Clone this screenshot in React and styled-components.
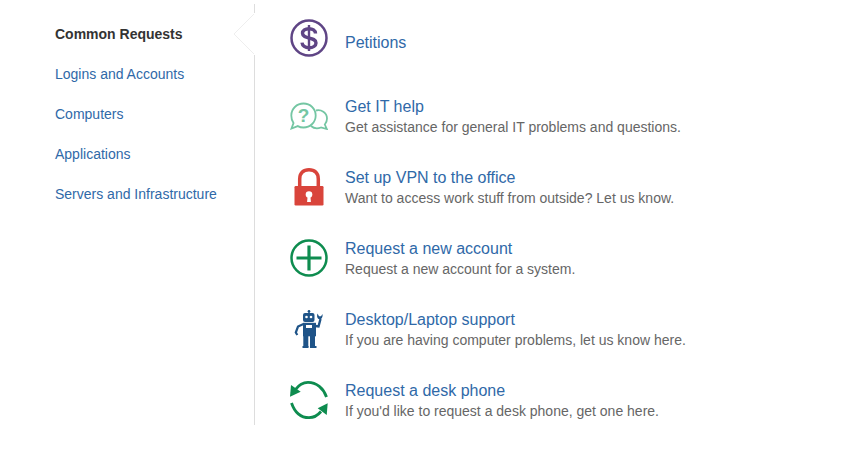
import React from "react";
import styled, { createGlobalStyle } from "styled-components";

const Global = createGlobalStyle`
  html, body { margin: 0; padding: 0; background: #fff; }
  body { font-family: "Liberation Sans", Arial, sans-serif; }
`;

const Page = styled.div`
  display: flex;
  width: 861px;
  height: 450px;
  padding-top: 4px;
  box-sizing: border-box;
  align-items: flex-start;
`;

const Sidebar = styled.nav`
  position: relative;
  width: 255px;
  height: 421px;
  box-sizing: border-box;
  border-right: 1px solid #dddddd;
  padding: 10px 0 0 55px;
  display: flex;
  flex-direction: column;
`;

const NavItem = styled.a`
  display: block;
  height: 40px;
  line-height: 40px;
  font-size: 14px;
  color: ${(p) => (p.$active ? "#333333" : "#2f69a8")};
  font-weight: ${(p) => (p.$active ? 700 : 400)};
  white-space: nowrap;
`;

const Notch = styled.svg`
  position: absolute;
  right: -1px;
  top: 9px;
  width: 22px;
  height: 42px;
`;

const Main = styled.main`
  padding: 14px 0 0 35px;
  display: flex;
  flex-direction: column;
`;

const Row = styled.div`
  display: flex;
  align-items: center;
  height: ${(p) => p.$h || 71}px;
`;

const IconBox = styled.div`
  width: 38px;
  height: 40px;
  margin-right: 17px;
  margin-bottom: ${(p) => p.$raise || 2}px;
  display: flex;
  align-items: center;
  justify-content: center;
  flex: none;
`;

const Title = styled.div`
  font-size: 16px;
  line-height: 21px;
  color: #2f69a8;
`;

const Desc = styled.div`
  font-size: 14px;
  line-height: 20px;
  color: #666666;
`;

const Dollar = () => (
  <svg width="38" height="38" viewBox="0 0 38 38">
    <circle cx="19" cy="19" r="17.500" fill="none" stroke="#5f4585" strokeWidth="2.500" />
    <path d="M25.500 14.500c0-3-3-4.800-6.500-4.800-3.800 0-6.500 1.800-6.500 4.600 0 6.300 13.500 3.200 13.500 9.600 0 3-3 4.800-7 4.800-3.700 0-6.700-1.800-7-5" fill="none" stroke="#5f4585" strokeWidth="3.400" />
    <path d="M17.800 6h2.400v26h-2.400z" fill="#5f4585" />
  </svg>
);

const Chat = () => (
  <svg width="38" height="28" viewBox="0 0 38 28">
    <path d="M26 8.500c5-1.200 11 2 11 8 0 2.500-.8 4.500-2.200 6l2 4.500-5.800-1.500c-3.500 1.300-7.500.7-10-1.500" fill="none" stroke="#74c6a3" strokeWidth="1.800" />
    <path d="M13.500 1.500c6.800 0 12.200 5.300 12.200 12s-5.400 12-12.200 12c-2.200 0-4-.5-5.700-1.400L1.500 26.500l2-5.400C2 19 1.300 16.400 1.300 13.500c0-6.700 5.400-12 12.200-12z" fill="#fff" stroke="#74c6a3" strokeWidth="1.800" />
    <text x="13.500" y="20" textAnchor="middle" fontFamily="Liberation Sans" fontWeight="700" fontSize="19" fill="#74c6a3">?</text>
  </svg>
);

const Lock = () => (
  <svg width="30" height="40" viewBox="0 0 30 40">
    <path d="M5.700 21V12C5.700 6 9.500 2.700 15 2.700S24.300 6 24.300 12v9" fill="none" stroke="#d9443b" strokeWidth="3.500" />
    <rect x="0.500" y="19" width="29" height="19.500" rx="1.200" fill="#d9443b" />
    <circle cx="15" cy="27.500" r="3.300" fill="#fff" />
    <path d="M13.700 28h2.600l.6 7h-3.800z" fill="#fff" />
  </svg>
);

const Plus = () => (
  <svg width="38" height="38" viewBox="0 0 38 38">
    <circle cx="19" cy="19" r="17.500" fill="none" stroke="#0e8c4f" strokeWidth="2.500" />
    <path d="M19 6.500v25M6.500 19h25" stroke="#0e8c4f" strokeWidth="3.200" />
  </svg>
);

const Robot = () => (
  <svg width="30" height="38" viewBox="0 0 30 38">
    <g fill="#1f5488">
      <circle cx="15" cy="1.300" r="1.300" />
      <rect x="14.300" y="1.500" width="1.400" height="2" />
      <rect x="9" y="3" width="11.500" height="9" rx="2" />
      <rect x="9" y="12.800" width="13" height="13.500" />
      <rect x="9.300" y="26" width="5" height="11" />
      <rect x="16" y="26" width="5" height="11" />
      <rect x="8.500" y="36" width="6" height="2" />
      <rect x="16" y="36" width="6.500" height="2" />
    </g>
    <path d="M9.500 14L4 16.500 1.800 22.500l1.500 2.500" fill="none" stroke="#1f5488" strokeWidth="2.200" />
    <path d="M21.500 16l3 .5 2-7.500" fill="none" stroke="#1f5488" strokeWidth="2.400" />
    <path d="M23.500 3.500c-.8 2.500-.5 4.500 1 5.500h2.500c1.500-1.200 1.800-3 1.500-5l-1.500 2.200h-2z" fill="#1f5488" />
    <circle cx="12.500" cy="7" r="1.300" fill="#fff" />
    <circle cx="17" cy="7" r="1.300" fill="#fff" />
    <rect x="12" y="15" width="6" height="3" fill="#fff" />
  </svg>
);

const Sync = () => (
  <svg width="38" height="40" viewBox="0 0 38 40">
    <path d="M5.500 9.500C9 4.500 13 2.300 18 2.300c8.500 0 15.500 6 18.500 14.700" fill="none" stroke="#0e8c4f" strokeWidth="2.800" />
    <path d="M0 16.700L1 5l9.700 6.700z" fill="#0e8c4f" />
    <path d="M1.500 23c3 8.700 9 14.700 17.500 14.700 4.500 0 8.500-2 12-6.200" fill="none" stroke="#0e8c4f" strokeWidth="2.800" />
    <path d="M37.700 23.300L36.700 35l-9-6.700z" fill="#0e8c4f" />
  </svg>
);

const nav = ["Common Requests", "Logins and Accounts", "Computers", "Applications", "Servers and Infrastructure"];

const rows = [
  { icon: <Chat />, t: "Get IT help", d: "Get assistance for general IT problems and questions." },
  { icon: <Lock />, t: "Set up VPN to the office", d: "Want to access work stuff from outside? Let us know." },
  { icon: <Plus />, t: "Request a new account", d: "Request a new account for a system." },
  { icon: <Robot />, t: "Desktop/Laptop support", d: "If you are having computer problems, let us know here." },
  { icon: <Sync />, t: "Request a desk phone", d: "If you'd like to request a desk phone, get one here." },
];

export default function App() {
  return (
    <>
      <Global />
      <Page>
        <Sidebar>
          {nav.map((n, i) => (
            <NavItem key={n} $active={i === 0}>{n}</NavItem>
          ))}
          <Notch viewBox="0 0 22 42">
            <path d="M21 0v42" stroke="#fff" strokeWidth="2" />
            <path d="M21 1L1 21l20 20" fill="#fff" stroke="#eeeeee" strokeWidth="1" />
          </Notch>
        </Sidebar>
        <Main>
          <Row $h={48}>
            <IconBox $raise={8}><Dollar /></IconBox>
            <Title>Petitions</Title>
          </Row>
          <Row $h={15} />
          {rows.map((r) => (
            <Row key={r.t}>
              <IconBox>{r.icon}</IconBox>
              <div>
                <Title>{r.t}</Title>
                <Desc>{r.d}</Desc>
              </div>
            </Row>
          ))}
        </Main>
      </Page>
    </>
  );
}
